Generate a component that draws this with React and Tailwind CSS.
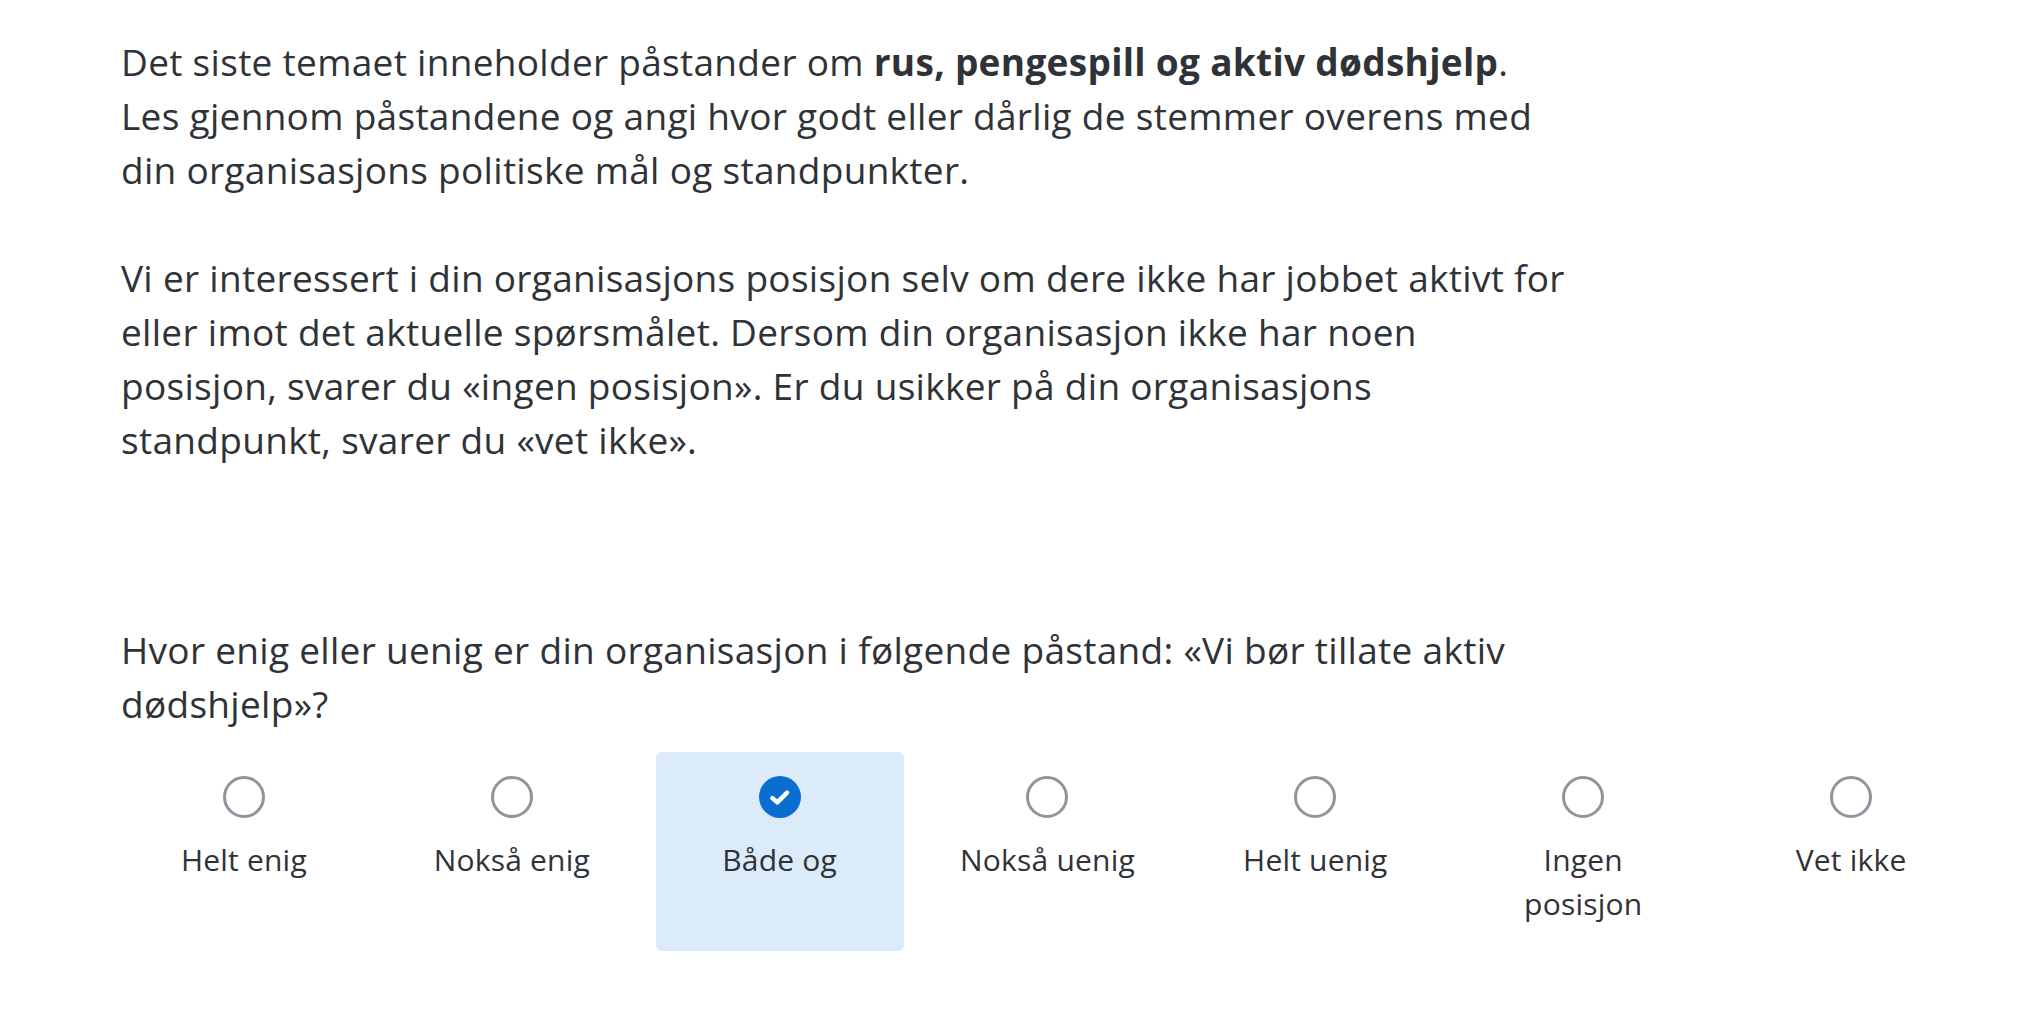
import React, { useState } from "react";

const options = [
  ["Helt enig"],
  ["Nokså enig"],
  ["Både og"],
  ["Nokså uenig"],
  ["Helt uenig"],
  ["Ingen", "posisjon"],
  ["Vet ikke"],
];

function Radio({ checked }) {
  if (checked) {
    return (
      <div className="w-[42px] h-[42px] rounded-full bg-[#0a6ed1] flex items-center justify-center">
        <svg width="26" height="26" viewBox="0 0 24 24" fill="none">
          <path d="M5 13l4.5 4L18.5 8" stroke="white" strokeWidth="4.2" strokeLinecap="round" strokeLinejoin="round" />
        </svg>
      </div>
    );
  }
  return <div className="w-[42px] h-[42px] rounded-full border-[3px] border-[#8d959d] bg-white" />;
}

export default function App() {
  const [selected, setSelected] = useState(2);

  return (
    <div className="min-h-screen bg-white text-[#2f3337] font-['Open_Sans','Liberation_Sans',sans-serif]">
      <div className="px-[110px] pt-[35px]">
        <div className="pl-[11px] text-[37px] leading-[54px] tracking-[0.3px] whitespace-nowrap">
          <p>
            Det siste temaet inneholder påstander om <strong className="font-bold">rus, pengespill og aktiv dødshjelp</strong>.
            <br />
            Les gjennom påstandene og angi hvor godt eller dårlig de stemmer overens med
            <br />
            din organisasjons politiske mål og standpunkter.
          </p>
          <br />
          <p>
            Vi er interessert i din organisasjons posisjon selv om dere ikke har jobbet aktivt for
            <br />
            eller imot det aktuelle spørsmålet. Dersom din organisasjon ikke har noen
            <br />
            posisjon, svarer du «ingen posisjon». Er du usikker på din organisasjons
            <br />
            standpunkt, svarer du «vet ikke».
          </p>
          <p className="mt-[156px]">
            Hvor enig eller uenig er din organisasjon i følgende påstand: «Vi bør tillate aktiv
            <br />
            dødshjelp»?
          </p>
        </div>

        <div className="mt-[21px] grid grid-cols-7 w-[1875px]">
          {options.map((lines, i) => (
            <div key={i} className="px-[10px]">
              <button
                onClick={() => setSelected(i)}
                className={`w-full h-[199px] rounded-[6px] flex flex-col items-center pt-[24px] ${selected === i ? "bg-[#dcebfa]" : "bg-white"}`}
              >
                <Radio checked={selected === i} />
                <span className="mt-[20px] text-[30px] leading-[44px] tracking-[0.2px] text-center">
                  {lines.map((l, j) => (
                    <span key={j} className="block">{l}</span>
                  ))}
                </span>
              </button>
            </div>
          ))}
        </div>
      </div>
    </div>
  );
}
